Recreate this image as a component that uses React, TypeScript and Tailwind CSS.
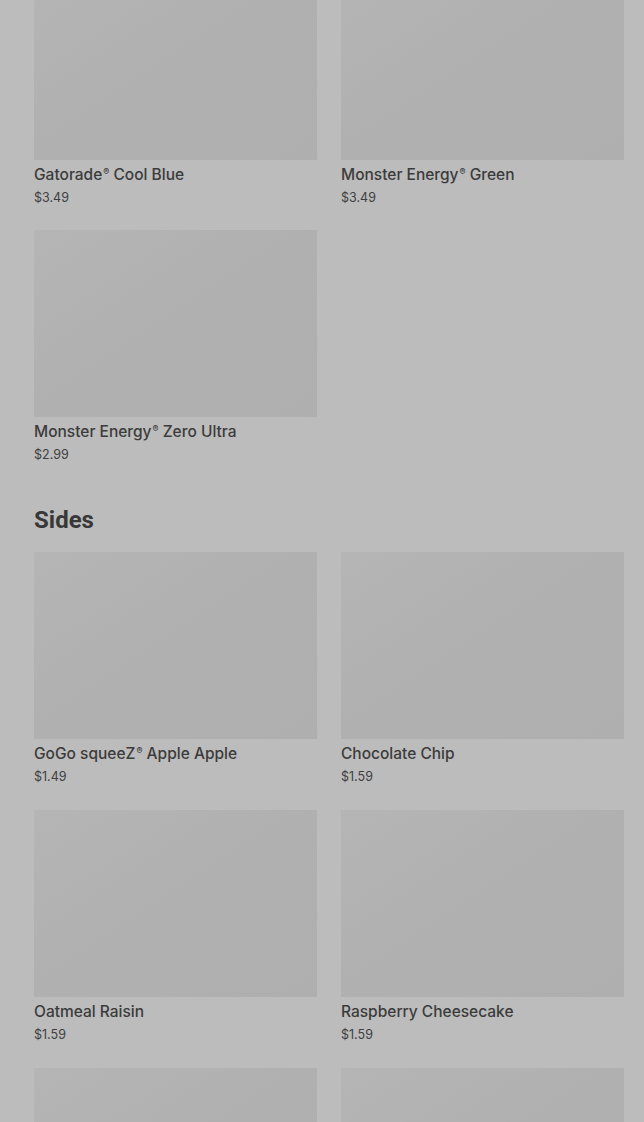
type Item = { name: string; mark?: boolean; rest?: string; price: string };

const drinks: Item[] = [
  { name: 'Gatorade', mark: true, rest: ' Cool Blue', price: '$3.49' },
  { name: 'Monster Energy', mark: true, rest: ' Green', price: '$3.49' },
  { name: 'Monster Energy', mark: true, rest: ' Zero Ultra', price: '$2.99' },
];

const sides: Item[] = [
  { name: 'GoGo squeeZ', mark: true, rest: ' Apple Apple', price: '$1.49' },
  { name: 'Chocolate Chip', price: '$1.59' },
  { name: 'Oatmeal Raisin', price: '$1.59' },
  { name: 'Raspberry Cheesecake', price: '$1.59' },
];

const MenuCard = ({ item }: { item: Item }) => (
  <div className="flex flex-col">
    <div className="h-[187px] w-full bg-gradient-to-br from-[#b5b5b5] via-[#b0b0b0] to-[#afafaf]" />
    <p className="mt-[3px] text-[15.5px] leading-[24px] font-medium text-[#3b3b3b]">
      {item.name}
      {item.mark && <sup className="text-[9px] -top-[5px] ml-[1px]">®</sup>}
      {item.rest}
    </p>
    <p className="text-[12.5px] leading-[21px] text-[#3f3f3f]">{item.price}</p>
  </div>
);

const App = () => {
  return (
    <div
      className="h-[1122px] overflow-hidden bg-[#bcbcbc] pl-[34px] pr-[20px]"
      style={{ fontFamily: 'Inter, "Noto Sans", sans-serif' }}
    >
      <div className="-mt-[27px]">
        <div className="grid grid-cols-2 gap-x-6 gap-y-[22px]">
          {drinks.map((d, i) => (
            <MenuCard key={i} item={d} />
          ))}
        </div>
        <h2
          className="mt-[39px] mb-4 text-[24px] leading-[32px] font-bold text-[#383838]"
          style={{ fontFamily: 'Roboto, "Noto Sans", sans-serif' }}
        >
          Sides
        </h2>
        <div className="grid grid-cols-2 gap-x-6 gap-y-[23px]">
          {sides.map((s, i) => (
            <MenuCard key={i} item={s} />
          ))}
          <div className="h-[187px] bg-gradient-to-br from-[#b5b5b5] via-[#b0b0b0] to-[#afafaf]" />
          <div className="h-[187px] bg-gradient-to-br from-[#b5b5b5] via-[#b0b0b0] to-[#afafaf]" />
        </div>
      </div>
    </div>
  );
};

export default App;
